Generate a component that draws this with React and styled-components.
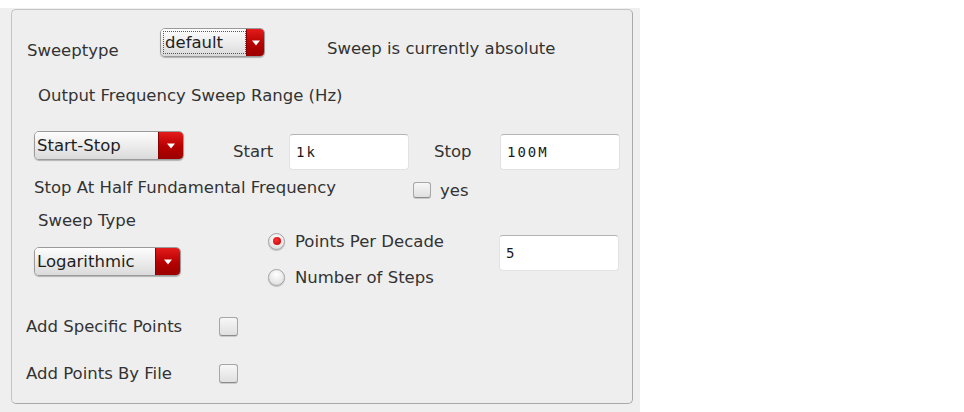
import React from 'react'
import styled, { createGlobalStyle } from 'styled-components'

const GlobalStyle = createGlobalStyle`
  *, *::before, *::after {
    box-sizing: border-box;
  }
  html, body {
    margin: 0;
    padding: 0;
    background: #ffffff;
  }
  body {
    font-family: "DejaVu Sans", "Liberation Sans", sans-serif;
    font-size: 16.5px;
    line-height: 19px;
    color: #333333;
  }
`

const Backdrop = styled.div`
  width: 640px;
  height: 404px;
  margin-top: 8px;
  padding: 1px 0 0 11px;
  background: #efefef;
`

const Panel = styled.div`
  width: 622px;
  height: 395px;
  border: 1px solid #c4c4c4;
  border-right-color: #a9a9a9;
  border-bottom-color: #a9a9a9;
  border-radius: 5px;
  background: #eeeeee;
  display: flex;
  flex-direction: column;
`

const Row = styled.div`
  display: flex;
  align-items: ${p => p.$align || 'flex-start'};
  margin-top: ${p => p.$top || 0}px;
  padding-left: ${p => p.$left || 0}px;
  flex-shrink: 0;
`

const Label = styled.span`
  display: inline-block;
  width: ${p => (p.$w ? `${p.$w}px` : 'auto')};
  margin-top: ${p => p.$top || 0}px;
  margin-left: ${p => p.$ml || 0}px;
  white-space: nowrap;
  flex-shrink: 0;
`

const Select = styled.div`
  display: flex;
  width: ${p => p.$w}px;
  height: ${p => p.$h || 29}px;
  margin-top: ${p => p.$top || 0}px;
  border: 1px solid #9a9a9a;
  border-radius: 5px;
  overflow: hidden;
  box-shadow: 0 1px 1px rgba(0, 0, 0, 0.25);
  flex-shrink: 0;
`

const SelectValue = styled.div`
  flex: 1;
  display: flex;
  align-items: center;
  padding-left: 2px;
  background: linear-gradient(#fdfdfd, #e9e9e9 60%, #dadada);
  color: #1e1e1e;
`

const FocusText = styled.span`
  display: flex;
  align-items: center;
  padding: 0 22px 0 1px;
  margin: 2px 0;
  height: calc(100% - 4px);
  border: 1px dotted #555;
`

const SelectButton = styled.div`
  width: 25px;
  display: flex;
  align-items: center;
  justify-content: center;
  background: linear-gradient(#e41b1b, #b50000 55%, #9c0000);
  border-left: 1px solid #8a0000;
`

const Input = styled.div`
  width: ${p => p.$w || 120}px;
  height: 36px;
  margin-top: ${p => p.$top || 0}px;
  padding: 0 6px;
  display: flex;
  align-items: center;
  background: #ffffff;
  border: 1px solid #e2e2e2;
  border-top-color: #b4b4b4;
  border-radius: 4px;
  font-family: "DejaVu Sans Mono", "DejaVu Sans", monospace;
  font-size: 14px;
  letter-spacing: 2px;
  color: #1a1a1a;
  flex-shrink: 0;
`

const Check = styled.span`
  display: inline-block;
  width: ${p => p.$size || 18}px;
  height: ${p => p.$size || 16}px;
  margin-top: ${p => p.$top || 0}px;
  border: 1px solid #a6a6a6;
  border-bottom-color: #8c8c8c;
  border-radius: 3px;
  background: linear-gradient(#f7f7f7, #e0e0e0);
  box-shadow: 0 1px 0 rgba(0, 0, 0, 0.15);
  flex-shrink: 0;
`

const RadioGroup = styled.div`
  width: ${p => p.$w}px;
  margin-left: ${p => p.$ml}px;
  display: flex;
  flex-direction: column;
  gap: 16px;
  flex-shrink: 0;
`

const RadioRow = styled.div`
  display: flex;
  align-items: center;
  gap: 10px;
  height: 20px;
`

const Radio = styled.span`
  width: 17px;
  height: 17px;
  border-radius: 50%;
  border: 1px solid #a2a2a2;
  background: radial-gradient(circle at 50% 30%, #ffffff, #e4e4e4 70%, #cfcfcf);
  box-shadow: 0 1px 1px rgba(0, 0, 0, 0.2);
  display: flex;
  align-items: center;
  justify-content: center;
  &::after {
    content: '';
    width: 8px;
    height: 8px;
    border-radius: 50%;
    background: ${p => (p.$on ? 'radial-gradient(circle at 40% 35%, #ff3030, #c00000)' : 'transparent')};
  }
`

const Arrow = () => (
  <svg width="10" height="6" viewBox="0 0 10 6">
    <path d="M1 0.5 L9 0.5 L5 5.5 Z" fill="#ffffff" />
  </svg>
)

const Dropdown = ({ value, width, focus, top }) => (
  <Select $w={width} $top={top}>
    <SelectValue>{focus ? <FocusText>{value}</FocusText> : value}</SelectValue>
    <SelectButton>
      <Arrow />
    </SelectButton>
  </Select>
)

export default function App() {
  return (
    <>
      <GlobalStyle />
      <Backdrop>
        <Panel>
          <Row $top={18} $left={15}>
            <Label $w={133} $top={13}>Sweeptype</Label>
            <Dropdown value="default" width={105} focus />
            <Label $ml={62} $top={11}>Sweep is currently absolute</Label>
          </Row>
          <Row $top={26} $left={26}>
            <Label>Output Frequency Sweep Range (Hz)</Label>
          </Row>
          <Row $top={26} $left={22}>
            <Dropdown value="Start-Stop" width={150} />
            <Label $w={56} $ml={49} $top={11}>Start</Label>
            <Input $top={3}>1k</Input>
            <Label $w={66} $ml={25} $top={11}>Stop</Label>
            <Input $top={3}>100M</Input>
          </Row>
          <Row $top={8} $left={22}>
            <Label $w={379}>Stop At Half Fundamental Frequency</Label>
            <Check $top={4} />
            <Label $ml={9} $top={3}>yes</Label>
          </Row>
          <Row $top={11} $left={26}>
            <Label>Sweep Type</Label>
          </Row>
          <Row $top={1} $left={22}>
            <Dropdown value="Logarithmic" width={147} top={16} />
            <RadioGroup $w={231} $ml={87}>
              <RadioRow>
                <Radio $on />
                Points Per Decade
              </RadioRow>
              <RadioRow>
                <Radio />
                Number of Steps
              </RadioRow>
            </RadioGroup>
            <Input $top={4}>5</Input>
          </Row>
          <Row $top={30} $left={14} $align="center">
            <Label $w={193}>Add Specific Points</Label>
            <Check $size={19} />
          </Row>
          <Row $top={28} $left={14} $align="center">
            <Label $w={193}>Add Points By File</Label>
            <Check $size={19} />
          </Row>
        </Panel>
      </Backdrop>
    </>
  )
}
